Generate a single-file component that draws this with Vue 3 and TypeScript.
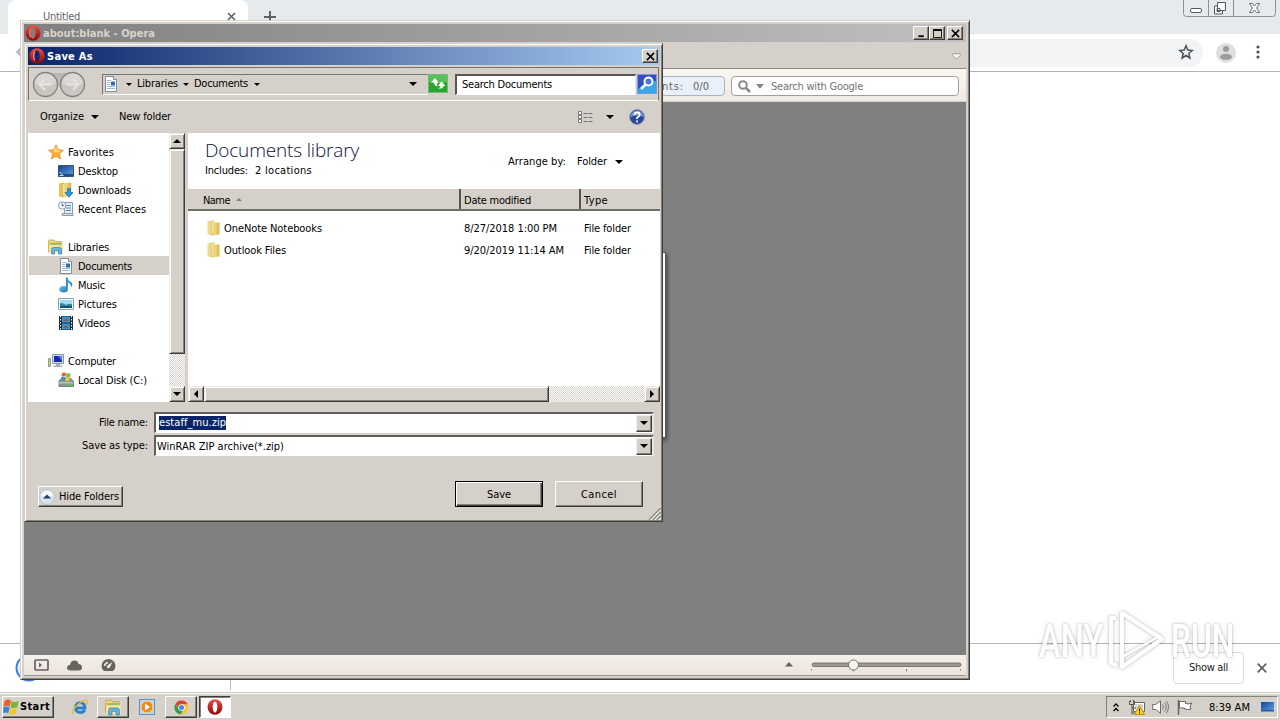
<script setup lang="ts">
interface TreeRow { label: string; icon: string; width: number; child?: boolean; active?: boolean }
interface FileRow { name: string; nameWidth: number; date: string; dateWidth: number }

const tree: (TreeRow | null)[] = [
  { label: 'Favorites', icon: 'star', width: 46 },
  { label: 'Desktop', icon: 'desktop', width: 40, child: true },
  { label: 'Downloads', icon: 'downloads', width: 53, child: true },
  { label: 'Recent Places', icon: 'recent', width: 68, child: true },
  null,
  { label: 'Libraries', icon: 'libraries', width: 41 },
  { label: 'Documents', icon: 'doc', width: 54, child: true, active: true },
  { label: 'Music', icon: 'music', width: 27, child: true },
  { label: 'Pictures', icon: 'pictures', width: 39, child: true },
  { label: 'Videos', icon: 'videos', width: 32, child: true },
  null,
  { label: 'Computer', icon: 'computer', width: 48 },
  { label: 'Local Disk (C:)', icon: 'disk', width: 69, child: true },
]

const files: FileRow[] = [
  { name: 'OneNote Notebooks', nameWidth: 98, date: '8/27/2018 1:00 PM', dateWidth: 93 },
  { name: 'Outlook Files', nameWidth: 62, date: '9/20/2019 11:14 AM', dateWidth: 100 },
]

// Spreads letters so that a label takes the given width.
const vFit = {
  mounted(el: HTMLElement, binding: { value: number }) {
    const natural = el.getBoundingClientRect().width
    const count = (el.textContent ?? '').length
    if (count) el.style.letterSpacing = `${(binding.value - natural) / count}px`
  },
}
</script>

<template>
  <div class="screen">
    <svg class="defs" width="0" height="0">
      <defs>
        <linearGradient id="gRed" x1="0" y1="0" x2="0" y2="1"><stop offset="0" stop-color="#ee4f49" /><stop offset="1" stop-color="#8e0505" /></linearGradient>
        <linearGradient id="gFolder" x1="0" y1="0" x2="1" y2="0"><stop offset="0" stop-color="#f8eaa0" /><stop offset="1" stop-color="#dcb845" /></linearGradient>
        <linearGradient id="gBlue" x1="0" y1="0" x2="1" y2="1"><stop offset="0" stop-color="#12408f" /><stop offset="1" stop-color="#5fa2ea" /></linearGradient>
        <linearGradient id="gNote" x1="0" y1="0" x2="1" y2="1"><stop offset="0" stop-color="#6cc5ee" /><stop offset="1" stop-color="#1570b5" /></linearGradient>
      </defs>
      <symbol id="opera" viewBox="0 0 16 16"><ellipse cx="8" cy="8" rx="7.500" ry="7.700" fill="url(#gRed)" /><ellipse cx="8" cy="8" rx="2.300" ry="5.600" fill="#fff" /></symbol>
      <symbol id="operaTitle" viewBox="0 0 16 16"><ellipse cx="8" cy="8" rx="7.600" ry="7.800" fill="url(#gRed)" /><ellipse cx="8" cy="8" rx="2.600" ry="5.800" fill="#8a7b78" /><path d="M5.400 3.600Q4 8 5.400 12.400" stroke="#e8a09c" fill="none" /></symbol>
      <symbol id="operaDark" viewBox="0 0 16 16"><ellipse cx="8" cy="8" rx="7.600" ry="7.800" fill="url(#gRed)" /><ellipse cx="8" cy="8" rx="2.600" ry="5.800" fill="#10276c" /><path d="M5.400 3.600Q4 8 5.400 12.400" stroke="#f6b4b0" fill="none" /></symbol>
      <symbol id="doc" viewBox="0 0 16 16"><path d="M2.500.5h8l3 3v12h-11z" fill="#fff" stroke="#7e8b99" /><path d="M10.500.5v3h3" fill="#dfe9f4" stroke="#7e8b99" /><path d="M4 4.500h4M4 6.500h3M4 8.500h3M4 10.500h8M4 12.500h8" stroke="#9db8d3" /><path d="M8 5.500h4v4H8z" fill="#2b6eb8" /></symbol>
      <symbol id="star" viewBox="0 0 16 16"><path d="M8 .7l2.200 5 5.300.5-4 3.600 1.200 5.300L8 12.300l-4.700 2.800 1.200-5.300-4-3.600 5.300-.5z" fill="#fbab30" stroke="#e58a30" stroke-width=".7" /><path d="M8 2.500l1.500 4 3.500.5-3 1.500-5-.5z" fill="#ffdd70" /></symbol>
      <symbol id="desktop" viewBox="0 0 16 16"><path d="M.5 2.500h15v11H.5z" fill="url(#gBlue)" stroke="#35526f" /><path d="M1 11h14v2H1z" fill="#1d4b83" /><path d="M2 9l3 4M1.500 12.500h4" stroke="#b8e5ee" /></symbol>
      <symbol id="downloads" viewBox="0 0 16 16"><path d="M1 1.500l5-1v15l-5-1z" fill="#e5c45b" /><path d="M4 2l9-1v12l-8 2z" fill="url(#gFolder)" stroke="#c9a644" stroke-width=".5" /><path d="M9.500 6.500h3v4h2.500l-4 4.800-4-4.800h2.500z" fill="#2c9be2" stroke="#1765a7" stroke-width=".7" /></symbol>
      <symbol id="recent" viewBox="0 0 16 16"><path d="M6.500 1.500h8v12h-8z" fill="#e6eef5" stroke="#8b9cab" /><path d="M8 4.500h5M8 7h5M8 9.500h5" stroke="#5f86ac" /><path d="M4 12.500h11v2H4z" fill="#d5dde4" stroke="#8b9cab" /><circle cx="4.200" cy="4.500" r="3.700" fill="#f4f8fb" stroke="#8c9aa6" /><path d="M4.200 2.200v2.500H6" stroke="#37648e" fill="none" /></symbol>
      <symbol id="libraries" viewBox="0 0 16 16"><path d="M.5 3V13h13V2.500H7L6 1H1z" fill="#f0d476" stroke="#c4a24a" stroke-width=".8" /><path d="M2 4h11v1.500H2z" fill="#79b871" /><path d="M1 6h14v8H1z" fill="#f8e696" /><path d="M3.500 15V10.500q0-2 2-2h6q2 0 2 2V15h-3v-3.500h-4V15z" fill="#68b5e2" stroke="#3886b7" stroke-width=".8" /></symbol>
      <symbol id="music" viewBox="0 0 16 16"><path d="M8 0h1.500q0 3 3.500 5 2.500 2 .3 5.500Q13.500 7 9.700 5.500v7" fill="url(#gNote)" /><ellipse cx="5.600" cy="12.300" rx="4.200" ry="3.200" fill="url(#gNote)" /><path d="M8 1h1.700v11H8z" fill="#2b8ecb" /></symbol>
      <symbol id="pictures" viewBox="0 0 16 16"><path d="M.5 2.500h15v11H.5z" fill="#fafcfd" stroke="#8aa0b1" /><path d="M2 4h12v8H2z" fill="#9fdcf2" /><path d="M2 7q4 0 6 2 3-2 6-1v4H2z" fill="#2e8b93" /><path d="M2 10h12v2H2z" fill="#174f80" /></symbol>
      <symbol id="videos" viewBox="0 0 16 16"><path d="M1 1h14v14H1z" fill="#1d2b39" /><path d="M4 1.500h8v6H4zM4 8.500h8v6H4z" fill="#3b93d0" /><path d="M5 6l3-3 3 3zM5 13l3-3 3 3z" fill="#8f5a4e" /><path d="M2.500 1v14M13.500 1v14" stroke="#fff" stroke-dasharray="1.500 1.500" /></symbol>
      <symbol id="computer" viewBox="0 0 16 16"><path d="M4.500 1.500h11v9h-11z" fill="#d8dce2" stroke="#8a94a2" /><path d="M6 3h8v6H6z" fill="#1528b4" /><path d="M10 3h4v5z" fill="#4d7aef" /><path d="M8 11h4v1.500h2.500V14h-9v-1.500H8z" fill="#a7afb9" /><path d="M.500 5.500h2v8h-2z" fill="#b7cf8f" stroke="#738468" stroke-width=".7" /></symbol>
      <symbol id="disk" viewBox="0 0 16 16"><path d="M1 9l3-3h8l3.500 3v5.500H1z" fill="#87988c" stroke="#5e7367" stroke-width=".8" /><path d="M1 10h14.500v1.500H1z" fill="#b9c4bc" /><path d="M10 12.500h4v1.200h-4z" fill="#41d93b" /><path d="M4 1q2-1 4 0L7.500 4.500q-2-1-4 0z" fill="#e5652b" /><path d="M8.500 1q2 1 4 0L12 4.500q-2 1-4 0z" fill="#76ba3d" /><path d="M3.300 5q2-1 4 0L6.800 8.500q-2-1-4 0z" fill="#458bd4" /><path d="M7.800 5q2 1 4 0l-.5 3.500q-2 1-4 0z" fill="#f5c833" /></symbol>
      <symbol id="folder" viewBox="0 0 16 16"><path d="M1.500 1.500l5-1.300v15.600l-5-1.500z" fill="#ecd98a" /><path d="M6 2.500h7.500v12L6 15.500z" fill="url(#gFolder)" /><path d="M5 2l3-1.500v14L6.300 15.800z" fill="#f6e8a2" stroke="#cfb14f" stroke-width=".5" /></symbol>
      <symbol id="flag" viewBox="0 0 16 16"><path d="M1 2q3-2.500 6.500-.5L6.300 7.500Q3.300 5.800 0 7.800z" fill="#e9602c" /><path d="M8.200 2q3 2 7 0l-1.400 6q-3 2-6.800.2z" fill="#75b83c" /><path d="M-.2 8.500q3-2 6.400-.3l-1.400 6q-3-1.500-5 0z" fill="#3d83d8" /><path d="M6.900 8.900q3.300 1.700 6.700-.2l-1.500 6q-3 2-6.500.2z" fill="#f7c52d" /></symbol>
    </svg>

    <!-- Browser in the background -->
    <div class="chrome">
      <div class="tabstrip">
        <div class="tab"><span v-fit="37" class="tabtext">Untitled</span><svg width="9" height="9" viewBox="0 0 9 9"><path d="M1 1l7 7M8 1L1 8" stroke="#5f6368" stroke-width="1.700" /></svg></div>
        <svg class="plus" width="12" height="12" viewBox="0 0 12 12"><path d="M6 0v12M0 6h12" stroke="#5f6368" stroke-width="2" /></svg>
        <svg class="winctl" width="94" height="17" viewBox="0 0 94 17"><path d="M.5 0v13.500q0 3 3 3h86q3 0 3-3V0M25.500 0v16M50.500 0v16" fill="none" stroke="#8b9197" /><rect x="7.500" y="8.500" width="11" height="4" rx="1.500" fill="#fff" stroke="#505866" /><path d="M34.500 2.500h8v8h-3v3.500h-8v-8h3z" fill="#fff" stroke="#505866" /><path d="M34.500 6v4.500h5M34 8.500h3v3h-3z" fill="none" stroke="#505866" /><path d="M66.500 3.500h3l2 2.500 2-2.500h3L73.500 8l3 4.500h-3l-2-2.500-2 2.500h-3l3-4.500z" fill="#fff" stroke="#6b727c" /></svg>
      </div>
      <div class="toolbar">
        <svg class="backarrow" width="8" height="12" viewBox="0 0 8 12"><path d="M7 1L2 6l5 5M2 6h6" fill="none" stroke="#b9bcc0" stroke-width="2" /></svg>
        <div class="omnibox"><svg width="16" height="16" viewBox="0 0 16 16"><path d="M8 1.800l1.800 4.300 4.500.4-3.500 3 1.100 4.500L8 11.500 4.100 14l1.100-4.500-3.500-3 4.500-.4z" fill="none" stroke="#4e5257" stroke-width="1.500" /></svg></div>
        <svg width="20" height="20" viewBox="0 0 20 20"><circle cx="10" cy="10" r="10" fill="#dedede" /><circle cx="10" cy="6" r="3" fill="#9b9b9b" /><ellipse cx="10" cy="13.800" rx="6" ry="3" fill="#9b9b9b" /></svg>
        <svg class="dots" width="4" height="14" viewBox="0 0 4 14"><circle cx="2" cy="2" r="1.600" fill="#4e5257" /><circle cx="2" cy="7" r="1.600" fill="#4e5257" /><circle cx="2" cy="12" r="1.600" fill="#4e5257" /></svg>
      </div>
      <div class="page"></div>
      <div class="shelf">
        <div class="download"><svg width="28" height="28" viewBox="0 0 28 28"><circle cx="14" cy="14" r="12.500" fill="#e8f0fe" stroke="#3d7edb" stroke-width="2" /></svg></div>
        <div class="showall"><span v-fit="39">Show all</span></div>
        <svg width="10" height="10" viewBox="0 0 10 10"><path d="M.7.7l8.600 8.600M9.300.7L.7 9.300" stroke="#5f6368" stroke-width="1.800" /></svg>
      </div>
    </div>

    <!-- Opera window -->
    <div class="opera">
      <div class="titlebar gray">
        <svg width="16" height="16"><use href="#operaTitle" /></svg>
        <b v-fit="112">about:blank - Opera</b>
        <div class="btns">
          <i class="wbtn"><svg width="10" height="10" viewBox="0 0 10 10"><path d="M1.500 8h6" stroke="#000" stroke-width="2" /></svg></i>
          <i class="wbtn"><svg width="10" height="10" viewBox="0 0 10 10"><path d="M.5 1h9v8.500h-9z" fill="none" stroke="#000" /><path d="M0 1.200h10" stroke="#000" stroke-width="2" /></svg></i>
          <i class="wbtn gap"><svg width="10" height="10" viewBox="0 0 10 10"><path d="M1 1l8 8M9 1L1 9" stroke="#000" stroke-width="1.700" /></svg></i>
        </div>
      </div>
      <div class="otabs"><svg width="9" height="7" viewBox="0 0 9 7"><path d="M.7.700h7.600v2L4.500 6 .7 2.700z" fill="#f5f2ef" stroke="#aaa39b" /></svg></div>
      <div class="obar">
        <div class="counter"><span v-fit="22">nts:</span><span v-fit="16">0/0</span></div>
        <div class="osearch">
          <svg width="13" height="13" viewBox="0 0 13 13"><circle cx="5" cy="5" r="3.800" fill="none" stroke="#8b8b8b" stroke-width="2" /><path d="M8 8l4 4" stroke="#8b8b8b" stroke-width="2.500" /></svg>
          <svg class="dd" width="8" height="5" viewBox="0 0 8 5"><path d="M0 0h8L4 4.800z" fill="#858585" /></svg>
          <span v-fit="92">Search with Google</span>
        </div>
      </div>
      <div class="canvas"></div>
      <div class="ostatus">
        <svg width="15" height="12" viewBox="0 0 15 12"><rect x="1" y="1" width="13" height="10" rx="1" fill="none" stroke="#67635e" stroke-width="1.700" /><path d="M5 3.500L8 6 5 8.500z" fill="#67635e" /></svg>
        <svg class="s2" width="15" height="11" viewBox="0 0 15 11"><path d="M3.500 10.500Q0 10.500 0 7.800q0-2.500 3-3Q4 .5 7.500.5q3.500 0 4 3.500 3.500.3 3.500 3.300 0 3.200-3.500 3.200z" fill="#67635e" /></svg>
        <svg class="s3" width="15" height="12" viewBox="0 0 15 12"><path d="M3 12Q.5 10 .5 7A7 7 0 0 1 14.500 7q0 3-2.500 5z" fill="#67635e" /><path d="M3.500 7q.5-3 3.500-3.500" fill="none" stroke="#efe9e4" stroke-width="1.500" /><path d="M11.500 3L8.800 8.500Q7 10 6 8.500T7 6z" fill="#efe9e4" /></svg>
        <svg class="slider" width="178" height="16" viewBox="0 0 178 16"><path d="M1 9.500L5 5l4 4.500z" fill="#67635e" /><rect x="28" y="6" width="149" height="3.500" rx="1.700" fill="#9d9893" stroke="#67635e" stroke-width=".8" /><path d="M27.500 12v1.500M69.500 12v2.500M122.500 12v2.500M176.500 12v1.500" stroke="#807b76" /><circle cx="69.500" cy="8" r="5" fill="#f7f4f1" stroke="#77726d" /></svg>
      </div>
    </div>
    <div class="behind"></div>

    <!-- Save dialog -->
    <div class="dialog">
      <div class="titlebar blue">
        <svg width="16" height="16"><use href="#operaDark" /></svg>
        <b v-fit="46">Save As</b>
        <div class="btns"><i class="wbtn"><svg width="10" height="10" viewBox="0 0 10 10"><path d="M1 1l8 8M9 1L1 9" stroke="#000" stroke-width="1.700" /></svg></i></div>
      </div>
      <div class="nav">
        <svg class="travel" width="54" height="27" viewBox="0 0 54 27"><path d="M14 2h26v9q-6 4-13 4T14 11z" fill="#bbb8b3" /><g fill="#c9c6c1" stroke="#85827d" stroke-width="1.300"><circle cx="13.500" cy="13.500" r="12" /><circle cx="40.500" cy="13.500" r="12" /></g><path d="M3 12.500a10.500 10 0 0 1 21 0q-10 4-21 0zM30 12.500a10.500 10 0 0 1 21 0q-10 4-21 0z" fill="#dad8d4" /><g fill="none" stroke="#e6e4e1" stroke-width="2"><path d="M13 8l-5.500 5.500L13 19M8 13.500h11.500" /><path d="M41 8l5.500 5.500L41 19M46 13.500H34.500" /></g></svg>
        <div class="crumbs">
          <svg width="16" height="16"><use href="#doc" /></svg>
          <i class="tri t1"></i><span v-fit="41">Libraries</span><i class="tri t2"></i><span v-fit="54">Documents</span><i class="tri t3"></i>
          <i class="tri big end"></i>
        </div>
        <svg class="refresh" width="21" height="20" viewBox="0 0 21 20"><rect x=".5" y=".5" width="19" height="18" fill="#25a72d" stroke="#78b97a" /><path d="M1 1h18v7Q10 11 1 8z" fill="#58c057" /><path d="M7 4L3 8.500h3q0 3.500 3.500 4-1-2.500 0-4H10.500zM13.500 7.500L10 12h2.500q-.5 2-3 2.500 6 .5 6-2.500h2z" fill="#fff" /></svg>
        <div class="dsearch"><span v-fit="90">Search Documents</span></div>
        <svg width="20" height="20" viewBox="0 0 20 20"><rect x=".5" y=".5" width="19" height="19" fill="#265cc8" stroke="#8096cf" /><path d="M1 12q9-5 18-5v12H1z" fill="#36a7e8" /><path d="M1 1h18v5Q8 9 1 15z" fill="#3150c8" /><circle cx="11.500" cy="7.500" r="4" fill="#4a78df" stroke="#fff" stroke-width="2" /><path d="M8.500 10.500L4 15" stroke="#fff" stroke-width="2.500" /></svg>
      </div>
      <div class="cmds">
        <span v-fit="44">Organize</span><i class="tri big c1"></i><span v-fit="52" class="newf">New folder</span>
        <svg class="view" width="16" height="13" viewBox="0 0 16 13"><g fill="#fff" stroke="#777"><path d="M1.500.5h3v3h-3zM1.500 4.500h3v3h-3zM1.500 8.500h3v3h-3z" /></g><path d="M6.500 2.500h9M6.500 6.500h9M6.500 10.500h9" stroke="#77746f" stroke-dasharray="4 1" /></svg>
        <i class="tri big c2"></i>
        <svg class="help" width="16" height="16" viewBox="0 0 16 16"><circle cx="8" cy="8" r="7.400" fill="#29469f" stroke="#8c96b6" /><path d="M1.500 8a6.500 6.500 0 0 1 13 0Q8 5 1.500 8z" fill="#7192d5" /><path d="M5.500 6q0-2.500 2.700-2.500 2.500 0 2.500 2.300 0 1.200-1.500 2T8 10M8 11.500v1.800" fill="none" stroke="#fff" stroke-width="1.800" /></svg>
      </div>
      <div class="panes">
        <div class="tree">
          <div v-for="(row, i) in tree" :key="i" class="row" :class="{ child: row?.child, active: row?.active }">
            <template v-if="row"><svg width="16" height="16"><use :href="'#' + row.icon" /></svg><span v-fit="row.width">{{ row.label }}</span></template>
          </div>
        </div>
        <div class="vscroll"><i class="sbtn"><i class="tri big up"></i></i><i class="thumb"></i><i class="track"></i><i class="sbtn"><i class="tri big"></i></i></div>
        <div class="list">
          <div class="libhead">
            <div><div class="libtitle"><span v-fit="154">Documents library</span></div><div class="inc"><span v-fit="43">Includes:</span><span v-fit="57">2 locations</span></div></div>
            <div class="arrange"><span v-fit="58">Arrange by:</span><span v-fit="30" class="fold">Folder</span><i class="tri big"></i></div>
          </div>
          <div class="cols"><div class="c-name"><span v-fit="27">Name</span><svg width="6" height="3" viewBox="0 0 6 3"><path d="M0 3l3-3 3 3z" fill="#85827e" /></svg></div><div class="c-date"><span v-fit="67">Date modified</span></div><div class="c-type"><span v-fit="24">Type</span></div></div>
          <div class="files">
            <div v-for="f in files" :key="f.name" class="file">
              <div class="f-name"><svg width="16" height="16"><use href="#folder" /></svg><span v-fit="f.nameWidth">{{ f.name }}</span></div>
              <div class="f-date"><span v-fit="f.dateWidth">{{ f.date }}</span></div>
              <div class="f-type"><span v-fit="47">File folder</span></div>
            </div>
          </div>
          <div class="hscroll"><i class="sbtn"><i class="tri left"></i></i><i class="thumb"></i><i class="track"></i><i class="sbtn"><i class="tri right"></i></i></div>
        </div>
      </div>
      <div class="fields">
        <div class="field"><label><span v-fit="49">File name:</span></label><div class="combo"><em><span v-fit="67">estaff_mu.zip</span></em><i class="cbtn"><i class="tri big"></i></i></div></div>
        <div class="field"><label><span v-fit="66">Save as type:</span></label><div class="combo type"><span v-fit="127">WinRAR ZIP archive(*.zip)</span><i class="cbtn"><i class="tri big"></i></i></div></div>
      </div>
      <div class="actions">
        <button class="hide"><svg width="16" height="16" viewBox="0 0 16 16"><circle cx="8" cy="8" r="7.500" fill="#d5e3ef" stroke="#b6c4d1" /><path d="M2 7a6 5.500 0 0 1 12 0z" fill="#f4f9fc" /><path d="M4 9.500L8 5.500l4 4z" fill="#263a55" /></svg><span v-fit="60">Hide Folders</span></button>
        <button class="save"><span v-fit="24">Save</span></button>
        <button class="cancel"><span v-fit="36">Cancel</span></button>
        <svg class="grip" width="12" height="12" viewBox="0 0 12 12"><path d="M0 12L12 0M4 12l8-8M8 12l4-4" stroke="#85827c" stroke-width="1.500" /><path d="M1.500 12L12 1.500M5.500 12L12 5.500M9.500 12L12 9.500" stroke="#fff" /></svg>
      </div>
    </div>

    <!-- Watermark -->
    <div class="mark">
      <div class="word"><span class="any">ANY</span></div>
      <svg width="58" height="64" viewBox="0 0 58 64"><g fill="none" stroke="#fff" stroke-width="4" stroke-linejoin="round"><path d="M8 9H3v45l6 3" /><path d="M14 4l40 26-40 28z" /><path d="M14 8v40l36-20" stroke-width="2.500" /></g></svg>
      <div class="word"><span class="run">RUN</span></div>
    </div>

    <!-- Taskbar -->
    <div class="taskbar">
      <div class="start"><svg width="17" height="16"><use href="#flag" /></svg><b v-fit="30">Start</b></div>
      <div class="task flat ie"><svg width="16" height="16" viewBox="0 0 16 16"><path d="M12.800 11Q11.300 13.500 8 13.500 3.500 13 3.500 8.500 4 4 8.300 3.700q4.500.3 4.600 5.300H4.500" fill="none" stroke="#2582cf" stroke-width="2.800" /><path d="M1 15Q-1 12 6 5.500T15.300 2q.7 1.500-1.300 4" fill="none" stroke="#eab93d" stroke-width="1.400" /></svg></div>
      <div class="task raised"><svg width="17" height="17"><use href="#libraries" /></svg></div>
      <div class="task flat"><svg width="16" height="16" viewBox="0 0 16 16"><rect x=".5" y=".5" width="15" height="15" fill="#b8d8f0" stroke="#5c91c0" /><circle cx="8" cy="8" r="6" fill="#f28a1b" stroke="#fbd194" /><path d="M6 4.500l5 3.500-5 3.500z" fill="#fff" /></svg></div>
      <div class="task raised"><svg width="15" height="15" viewBox="0 0 16 16"><circle cx="8" cy="8" r="7.500" fill="#f5c632" /><path d="M1.500 4.200A7.500 7.500 0 0 1 14.600 4.500H8L5 9.500z" fill="#dc4437" /><path d="M1.500 4.200L5 9.700 9 11.200 7.300 15.500A7.500 7.500 0 0 1 1.500 4.200z" fill="#2f9e51" /><circle cx="8" cy="8" r="3.500" fill="#fff" /><circle cx="8" cy="8" r="2.700" fill="#4586ee" /></svg></div>
      <div class="task pressed"><svg width="16" height="16"><use href="#opera" /></svg></div>
      <div class="tray">
        <svg class="chev" width="6" height="9" viewBox="0 0 6 9"><path d="M.5 3.500L3 1l2.500 2.500M.5 8L3 5.500 5.500 8" fill="none" stroke="#000" stroke-width="1.300" /></svg>
        <svg class="net" width="16" height="15" viewBox="0 0 16 15"><path d="M4.500 2.500h11v9h-11z" fill="#fff" stroke="#656565" /><path d="M6 4h8v6H6z" fill="#d8d5d0" /><path d="M.5 1v3.500h5V1M3 4.500v10M1.500 0v2M4.500 0v2M3 8h4M3 13h4" fill="none" stroke="#545454" /><path d="M10.500 5.500l5 9h-10z" fill="#f9d72a" stroke="#bb9107" /><path d="M10.500 8.500v3M10.500 12.300v1.200" stroke="#000" /></svg>
        <svg class="vol" width="17" height="14" viewBox="0 0 17 14"><path d="M.7 4.500h3L8.500.7v12.600L3.700 9.500h-3z" fill="#fff" stroke="#6a6a6a" /><path d="M10.500 4.500q2 2.500 0 5M12.500 2.500q3.500 4.500 0 9M14.500 1q4 6 0 12" fill="none" stroke="#777" /></svg>
        <svg class="act" width="16" height="15" viewBox="0 0 16 15"><path d="M1.500 0v15" stroke="#666" stroke-width="1.500" /><path d="M2.500 1.500h6v2q3 1 6.500-.5l-2 3 1 3q-3 1-6.500 0V8h-5z" fill="#fff" stroke="#666" /></svg>
        <span v-fit="41">8:39 AM</span>
        <svg class="desk" width="15" height="12" viewBox="0 0 15 12"><path d="M.5.5h14v10H.5z" fill="url(#gBlue)" stroke="#cad7e5" /><path d="M1 9h13v1.500H1z" fill="#225595" /></svg>
      </div>
    </div>
  </div>
</template>

<style>
html, body { overflow: hidden; }
</style>

<style scoped>
.screen { position: relative; width: 1280px; height: 720px; overflow: hidden; background: #fff; font: 11px/14px "DejaVu Sans Condensed", "DejaVu Sans", sans-serif; font-stretch: condensed; color: #000; }
.screen * { box-sizing: border-box; }
.defs { position: absolute; }
svg { display: block; flex: none; }
span, b { white-space: nowrap; flex: none; }
i, em { font-style: normal; }

.chrome { height: 692px; display: flex; flex-direction: column; }
.tabstrip { height: 34px; background: #e7eaed; display: flex; align-items: flex-start; }
.tab { width: 240px; height: 34px; margin-left: 8px; background: #fff; border-radius: 8px 8px 0 0; display: flex; align-items: flex-start; justify-content: space-between; padding: 10px 12px 0 35px; color: #5f6368; }
.tab svg { margin-top: 2px; }
.plus { margin: 11px 0 0 16px; }
.winctl { margin-left: auto; margin-right: 3px; }
.toolbar { height: 38px; border-bottom: 1px solid #b1b3b3; display: flex; align-items: center; padding: 0 20px 0 15px; }
.backarrow { margin-bottom: 2px; }
.omnibox { margin-left: 20px; flex: 1; height: 28px; border-radius: 14px; background: #f1f3f4; display: flex; justify-content: flex-end; align-items: center; padding-right: 9px; margin-right: 13px; }
.omnibox svg, .dots { margin-bottom: 1px; }
.dots { margin-left: 20px; }
.page { flex: 1; }
.shelf { height: 49px; border-top: 1px solid #b1b3b3; display: flex; align-items: center; padding-right: 13px; }
.download { width: 231px; height: 44px; border-right: 1px solid #bbb; padding: 8px 0 0 15px; }
.showall { margin-left: auto; margin-right: 13px; width: 71px; height: 32px; border: 1px solid #dadce0; border-radius: 4px; display: flex; justify-content: center; align-items: center; color: #222; }

.opera { position: absolute; left: 20px; top: 20px; width: 950px; height: 660px; background: #d5d0c9; border: 1px solid; border-color: #d5d0c9 #45433f #45433f #d5d0c9; box-shadow: inset 1px 1px #fff, inset -1px -1px #858179; padding: 3px; display: flex; flex-direction: column; }
.titlebar { height: 18px; flex: none; display: flex; align-items: center; padding: 0 3px 0 1px; }
.titlebar b { margin-left: 2px; padding-top: 1px; }
.gray { background: linear-gradient(90deg, #808080, #c0c0c0); color: #d8d3cb; }
.blue { background: linear-gradient(90deg, #0a246a, #a6caf0); color: #fff; }
.blue b { padding-top: 2px; }
.btns { display: flex; margin-left: auto; }
.wbtn { width: 16px; height: 14px; background: #d5d0c9; border: 1px solid; border-color: #fff #403d39 #403d39 #fff; box-shadow: inset -1px -1px #858179; display: flex; align-items: center; justify-content: center; }
.wbtn svg { width: 9px; height: 9px; }
.gap { margin-left: 2px; }
.otabs { height: 27px; flex: none; border-bottom: 1px solid #8e8983; display: flex; align-items: center; justify-content: flex-end; padding: 2px 5px 0 0; }
.obar { height: 33px; flex: none; background: linear-gradient(#faf7f2, #eee9e3); border-bottom: 1px solid #d5d0c9; display: flex; align-items: center; padding: 2px 7px 0 0; justify-content: flex-end; color: #66625f; }
.obar span { padding-top: 1px; }
.counter { width: 85px; height: 20px; background: #eaf0fa; border: 1px solid #a7b2c5; border-radius: 4px; margin-right: 6px; display: flex; align-items: center; justify-content: flex-end; padding-right: 15px; gap: 9px; }
.osearch { width: 228px; height: 20px; background: #fff; border: 1px solid #a39e98; border-radius: 4px; display: flex; align-items: center; padding-left: 6px; color: #77736f; }
.dd { margin: 0 7px 0 5px; }
.canvas { flex: 1; background: #808080; }
.ostatus { height: 21px; flex: none; background: linear-gradient(#f5f0eb, #ebe4de); border-bottom: 1px solid #9d9892; display: flex; align-items: center; padding: 0 4px 0 10px; }
.s2 { margin-left: 18px; }
.s3 { margin-left: 19px; }
.slider { margin-left: auto; }
.behind { position: absolute; left: 655px; top: 252px; width: 11px; height: 186px; background: #fff; border: 1px solid #555; border-left: 0; box-shadow: 1px 2px 4px rgba(0, 0, 0, .55); }

.dialog { position: absolute; left: 24px; top: 43px; width: 639px; height: 479px; background: #d5d0c9; border: 1px solid; border-color: #d5d0c9 #403e3a #403e3a #d5d0c9; box-shadow: inset 1px 1px #fff, inset -1px -1px #858179; padding: 3px 2px 2px 3px; display: flex; flex-direction: column; }
.dialog .titlebar { padding-right: 2px; }
.nav { height: 34px; flex: none; margin: 2px 1px 0 0; border: 1px solid; border-color: #77736e #77736e #fff #77736e; display: flex; align-items: center; padding-left: 3px; }
.travel { margin-right: 16px; }
.crumbs { width: 326px; height: 21px; border: 1px solid; border-color: #77736e #d5d0c9 #fff #77736e; display: flex; align-items: center; }
.tri { display: block; flex: none; width: 0; height: 0; border: 3px solid transparent; border-top-color: #000; border-bottom: 0; }
.big { border-width: 4px 4px 0; }
.up { border: 4px solid transparent; border-top: 0; border-bottom-color: #000; }
.left { border: 4px solid transparent; border-left: 0; border-right-color: #000; }
.right { border: 4px solid transparent; border-right: 0; border-left-color: #000; }
.t1 { margin: 0 5px 0 7px; }
.t2 { margin: 0 5px; }
.t3 { margin-left: 6px; }
.end { margin: 0 10px 0 auto; }
.refresh { margin-right: 6px; }
.dsearch { width: 181px; height: 21px; margin-right: 1px; background: #fff; border: 2px solid; border-color: #59554f #e8e5e1 #fff #59554f; border-right-width: 1px; border-bottom-width: 1px; padding: 2px 0 0 5px; }
.cmds { height: 32px; flex: none; display: flex; align-items: center; padding-left: 12px; }
.c1 { margin-left: 7px; }
.newf { margin-left: 20px; }
.view { margin-left: 406px; }
.c2 { margin-left: 13px; }
.help { margin-left: 15px; }
.panes { height: 269px; flex: none; display: flex; }
.tree { width: 141px; background: #fff; padding: 9px 0 0 1px; overflow: hidden; }
.row { height: 19px; display: flex; align-items: center; padding-left: 19px; }
.row span { margin-left: 4px; padding-top: 2px; }
.child { padding-left: 29px; }
.active { background: #d5d0c9; }
.vscroll { width: 16px; display: flex; flex-direction: column; margin-right: 3px; }
.sbtn, .thumb { background: #d5d0c9; border: 1px solid; border-color: #eeebe7 #403d39 #403d39 #eeebe7; box-shadow: inset 1px 1px #fff, inset -1px -1px #858179; }
.sbtn { width: 16px; height: 16px; flex: none; display: flex; align-items: center; justify-content: center; }
.track { flex: 1; background: repeating-conic-gradient(#fff 0 25%, #d5d0c9 0 50%) 0 0 / 2px 2px; }
.vscroll .thumb { height: 205px; }
.list { flex: 1; min-width: 0; background: #fff; display: flex; flex-direction: column; }
.libhead { height: 56px; flex: none; display: flex; justify-content: space-between; padding: 5px 37px 0 17px; }
.libtitle { font: 300 19px/24px "Open Sans", "Noto Sans", sans-serif; color: #10103c; }
.inc { display: flex; gap: 7px; margin-top: 2px; }
.arrange { display: flex; align-items: center; height: 14px; margin-top: 17px; }
.fold { margin: 0 8px 0 11px; }
.cols { height: 22px; flex: none; display: flex; overflow: hidden; background: #d5d0c9; border-bottom: 2px solid #716d68; }
.cols > div { display: flex; align-items: center; flex: none; padding: 3px 0 0 3px; }
.cols .c-name { width: 273px; padding-left: 15px; border-right: 2px solid #55514c; }
.c-name svg { margin: 0 0 2px 6px; }
.cols .c-date { width: 120px; border-right: 2px solid #55514c; }
.files { flex: 1; padding-top: 6px; }
.file { height: 22px; display: flex; align-items: center; }
.f-name { display: flex; align-items: center; width: 276px; padding-left: 18px; }
.f-name span { margin-left: 2px; padding-top: 2px; }
.f-date { width: 120px; padding-top: 2px; }
.f-type { padding-top: 2px; }
.hscroll { height: 16px; display: flex; }
.hscroll .thumb { width: 345px; }
.fields { padding-left: 45px; margin-top: 9px; }
.field { display: flex; height: 23px; align-items: center; }
label { width: 75px; padding-top: 1px; display: flex; justify-content: flex-end; }
.combo { margin-left: 6px; width: 500px; height: 21px; background: #fff; border: 2px solid; border-color: #625e59 #e8e5e1 #fff #625e59; border-bottom-width: 1px; border-right-width: 2px; display: flex; align-items: center; justify-content: space-between; padding-left: 3px; }
.type { padding-left: 1px; }
.type span { padding-top: 1px; }
em { background: #0a246a; color: #fff; height: 14px; display: flex; padding: 0; }
.cbtn { width: 16px; height: 17px; background: #d5d0c9; border: 1px solid; border-color: #eee #403d39 #403d39 #eee; box-shadow: inset -1px -1px #858179; display: flex; align-items: center; justify-content: center; }
.actions { display: flex; align-items: flex-start; padding: 24px 0 0 10px; flex: 1; }
button { font: inherit; font-stretch: inherit; background: #d5d0c9; color: #000; border: 1px solid; border-color: #fff #403d39 #403d39 #fff; box-shadow: inset -1px -1px #858179; display: flex; align-items: center; justify-content: center; padding: 0; flex: none; }
button span { padding-top: 1px; }
.hide { width: 85px; height: 21px; margin-top: 5px; gap: 4px; justify-content: flex-start; }
.save { width: 88px; height: 26px; margin-left: 332px; border: 1px solid #000; box-shadow: inset 1px 1px #fff, inset -1px -1px #403d39, inset -2px -2px #858179; }
.cancel { width: 88px; height: 26px; margin-left: 12px; }
.grip { margin: 27px 0 0 6px; }

.mark { position: absolute; left: 1039px; top: 608px; height: 66px; display: flex; align-items: center; font: 500 46px/50px Roboto, sans-serif; color: #fff; filter: drop-shadow(0 0 1px rgba(0, 0, 0, .18)) drop-shadow(0 0 2px rgba(0, 0, 0, .16)); }
.mark svg { margin: 0 5px 0 6px; }
.word { width: 63px; display: flex; }
.word span { transform-origin: 0 50%; }
.any { transform: scaleX(.71); }
.run { transform: scaleX(.69); }

.taskbar { position: absolute; left: 0; top: 692px; width: 1280px; height: 28px; background: #d5d0c9; border-top: 1px solid #c9c9c2; box-shadow: inset 0 1px #fff; display: flex; align-items: flex-start; padding: 3px 2px 0 2px; }
.start { width: 52px; height: 22px; border: 1px solid; border-color: #fff #403d39 #403d39 #fff; box-shadow: inset -1px -1px #858179; display: flex; align-items: center; margin-right: 10px; }
.task { width: 32px; height: 22px; display: flex; align-items: center; justify-content: center; margin-right: 2px; }
.flat { width: 32px; }
.ie { margin-right: 1px; }
.raised { border: 1px solid; border-color: #fff #403d39 #403d39 #fff; box-shadow: inset -1px -1px #858179; }
.pressed { border: 1px solid; border-color: #403d39 #fff #fff #403d39; background: #fff; box-shadow: inset 1px 1px #858179; }
.tray { margin-left: auto; width: 172px; height: 22px; border: 1px solid; border-color: #858179 #fff #fff #858179; display: flex; align-items: center; padding-left: 6px; }
.tray span { padding-top: 1px; }
.net { margin-left: 10px; }
.vol { margin-left: 7px; }
.act { margin-left: 8px; margin-right: 16px; }
.desk { margin-left: 10px; }
</style>
